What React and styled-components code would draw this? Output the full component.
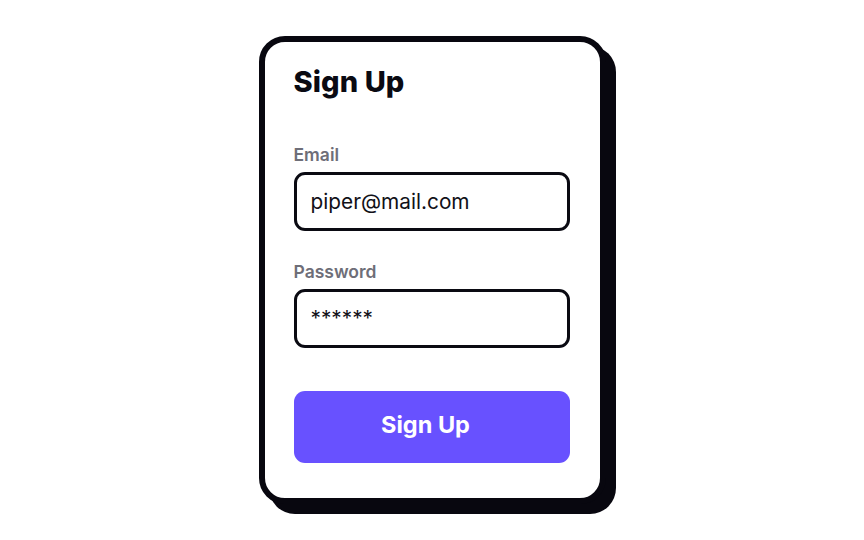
import React from "react"
import styled, { createGlobalStyle } from "styled-components"

const GlobalStyle = createGlobalStyle`
  html, body {
    margin: 0;
    padding: 0;
    background: #ffffff;
    font-family: Inter, "Noto Sans", sans-serif;
  }
`

const Page = styled.div`
  width: 100%;
  height: 100vh;
  display: flex;
  align-items: center;
  justify-content: center;
`

const Card = styled.form`
  box-sizing: border-box;
  width: 347px;
  padding: 23px 30px 35px 29px;
  background: #ffffff;
  border: 6px solid #08070f;
  border-radius: 26px;
  box-shadow: 10px 10px 0 #08070f;
  display: flex;
  flex-direction: column;
`

const Title = styled.h1`
  margin: 0 0 45px;
  font-size: 29px;
  font-weight: 800;
  letter-spacing: 0.1px;
  color: #0a0a12;
  line-height: 34px;
`

const Field = styled.label`
  display: flex;
  flex-direction: column;
  gap: 7px;
  margin-bottom: ${(p) => p.gap || 0}px;
`

const LabelText = styled.span`
  font-size: 17.5px;
  font-weight: 600;
  color: #6e6e78;
  line-height: 21px;
`

const Input = styled.input`
  box-sizing: border-box;
  width: 100%;
  height: 59px;
  padding: 0 14px;
  border: 3px solid #0a0a12;
  border-radius: 11px;
  font-family: Inter, "Noto Sans", sans-serif;
  font-size: 20.8px;
  color: #111118;
  background: #ffffff;
  outline: none;
`

const Button = styled.button`
  height: 72px;
  padding: 0 12px 6px 0;
  border: none;
  border-radius: 11px;
  background: #6851ff;
  color: #ffffff;
  font-family: Inter, "Noto Sans", sans-serif;
  font-size: 23.5px;
  font-weight: 700;
  cursor: pointer;
`

export default function App() {
  return (
    <Page>
      <GlobalStyle />
      <Card onSubmit={(e) => e.preventDefault()}>
        <Title>Sign Up</Title>
        <Field gap={30}>
          <LabelText>Email</LabelText>
          <Input type="text" defaultValue="piper@mail.com" />
        </Field>
        <Field gap={43}>
          <LabelText>Password</LabelText>
          <Input type="text" defaultValue="******" />
        </Field>
        <Button type="submit">Sign Up</Button>
      </Card>
    </Page>
  )
}
